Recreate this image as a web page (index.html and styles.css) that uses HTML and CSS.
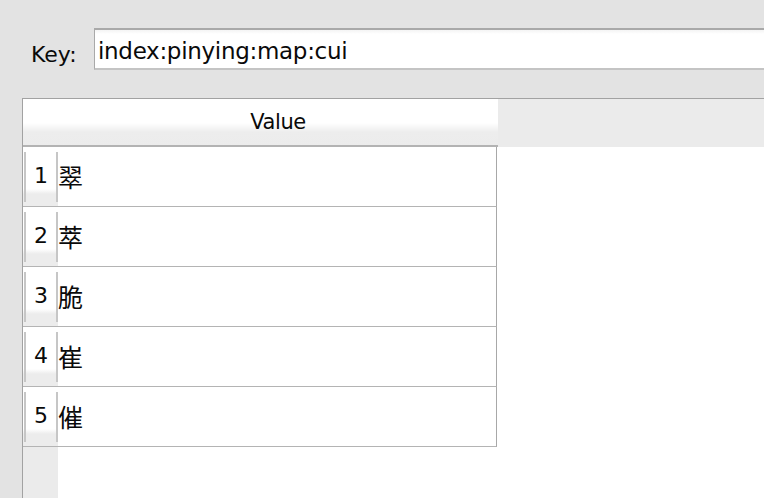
FILE: index.html
```html
<!DOCTYPE html>
<html>
<head>
<meta charset="utf-8">
<link rel="stylesheet" href="styles.css">
</head>
<body>
<div class="app">
  <div class="keybar">
    <span class="key-label">Key:</span>
    <div class="key-field">index:pinying:map:cui</div>
  </div>
  <div class="frame">
    <div class="thead">
      <div class="corner"></div>
      <div class="colhead">Value</div>
      <div class="thead-rest"></div>
    </div>
    <div class="tbody">
      <div class="row"><div class="rh">1</div><div class="cell">翠</div></div>
      <div class="row"><div class="rh">2</div><div class="cell">萃</div></div>
      <div class="row"><div class="rh">3</div><div class="cell">脆</div></div>
      <div class="row"><div class="rh">4</div><div class="cell">崔</div></div>
      <div class="row"><div class="rh">5</div><div class="cell">催</div></div>
      <div class="filler"><div class="rh-fill"></div><div class="cell-fill"></div></div>
    </div>
  </div>
</div>
</body>
</html>
```

FILE: styles.css
```css
html, body {
  margin: 0;
  padding: 0;
  width: 764px;
  height: 498px;
  overflow: hidden;
  background: #e3e3e3;
  font-family: "DejaVu Sans", "Noto Sans CJK SC", sans-serif;
  color: #0a0a0a;
}

.app {
  display: flex;
  flex-direction: column;
  height: 498px;
}

.keybar {
  height: 98px;
  display: flex;
  align-items: center;
  padding-left: 31px;
  gap: 14px;
  box-sizing: border-box;
}

.key-label {
  font-size: 22px;
  width: 49px;
  padding-top: 11px;
}

.key-field {
  flex: 1;
  margin-right: -20px;
  height: 42px;
  box-sizing: border-box;
  background: linear-gradient(#f4f4f4 0, #ffffff 4px, #ffffff 100%);
  border-top: 2px solid #a9a9a9;
  border-left: 1px solid #a9a9a9;
  border-bottom: 2px solid #c4c4c4;
  font-size: 23px;
  letter-spacing: -0.3px;
  line-height: 42px;
  padding-left: 3px;
  margin-top: -1px;
}

.frame {
  flex: 1;
  margin-left: 22px;
  border-top: 1px solid #a2a2a2;
  border-left: 1px solid #a2a2a2;
  display: flex;
  flex-direction: column;
  background: #ffffff;
}

.thead {
  display: flex;
  height: 48px;
}

.corner, .colhead {
  background: linear-gradient(#ffffff 0, #ffffff 24px, #ededed 33px, #ececec 100%);
  border-bottom: 2px solid #b3b3b3;
  box-sizing: border-box;
}

.corner {
  width: 35px;
}

.colhead {
  width: 440px;
  font-size: 21px;
  letter-spacing: -0.4px;
  text-align: center;
  line-height: 46px;
}

.thead-rest {
  flex: 1;
  background: #ebebeb;
}

.tbody {
  flex: 1;
  display: flex;
  flex-direction: column;
}

.row {
  display: flex;
  height: 60px;
}

.rh {
  width: 35px;
  box-sizing: border-box;
  position: relative;
  background: linear-gradient(#ffffff 0, #ffffff 42px, #ececec 47px, #ececec 100%);
  border-bottom: 1px solid #b4b4b4;
  font-size: 22px;
  text-align: center;
  line-height: 58px;
  padding-left: 1px;
}

.rh::before, .rh::after {
  content: "";
  position: absolute;
  top: 5px;
  bottom: 4px;
  width: 2px;
  background: #c6c6c6;
}

.rh::before { left: 1px; }
.rh::after { right: 0; }

.row:last-of-type .rh {
  border-bottom: 2px solid #ababab;
  height: 61px;
}

.cell {
  width: 439px;
  box-sizing: border-box;
  border-right: 1px solid #a8a8a8;
  border-bottom: 1px solid #b4b4b4;
  font-family: "Noto Sans CJK SC", sans-serif;
  font-size: 25px;
  line-height: 58px;
  padding-left: 0;
}

.filler {
  flex: 1;
  display: flex;
}

.rh-fill {
  width: 35px;
  background: #ebebeb;
}

.cell-fill {
  flex: 1;
  background: #ffffff;
}
```
